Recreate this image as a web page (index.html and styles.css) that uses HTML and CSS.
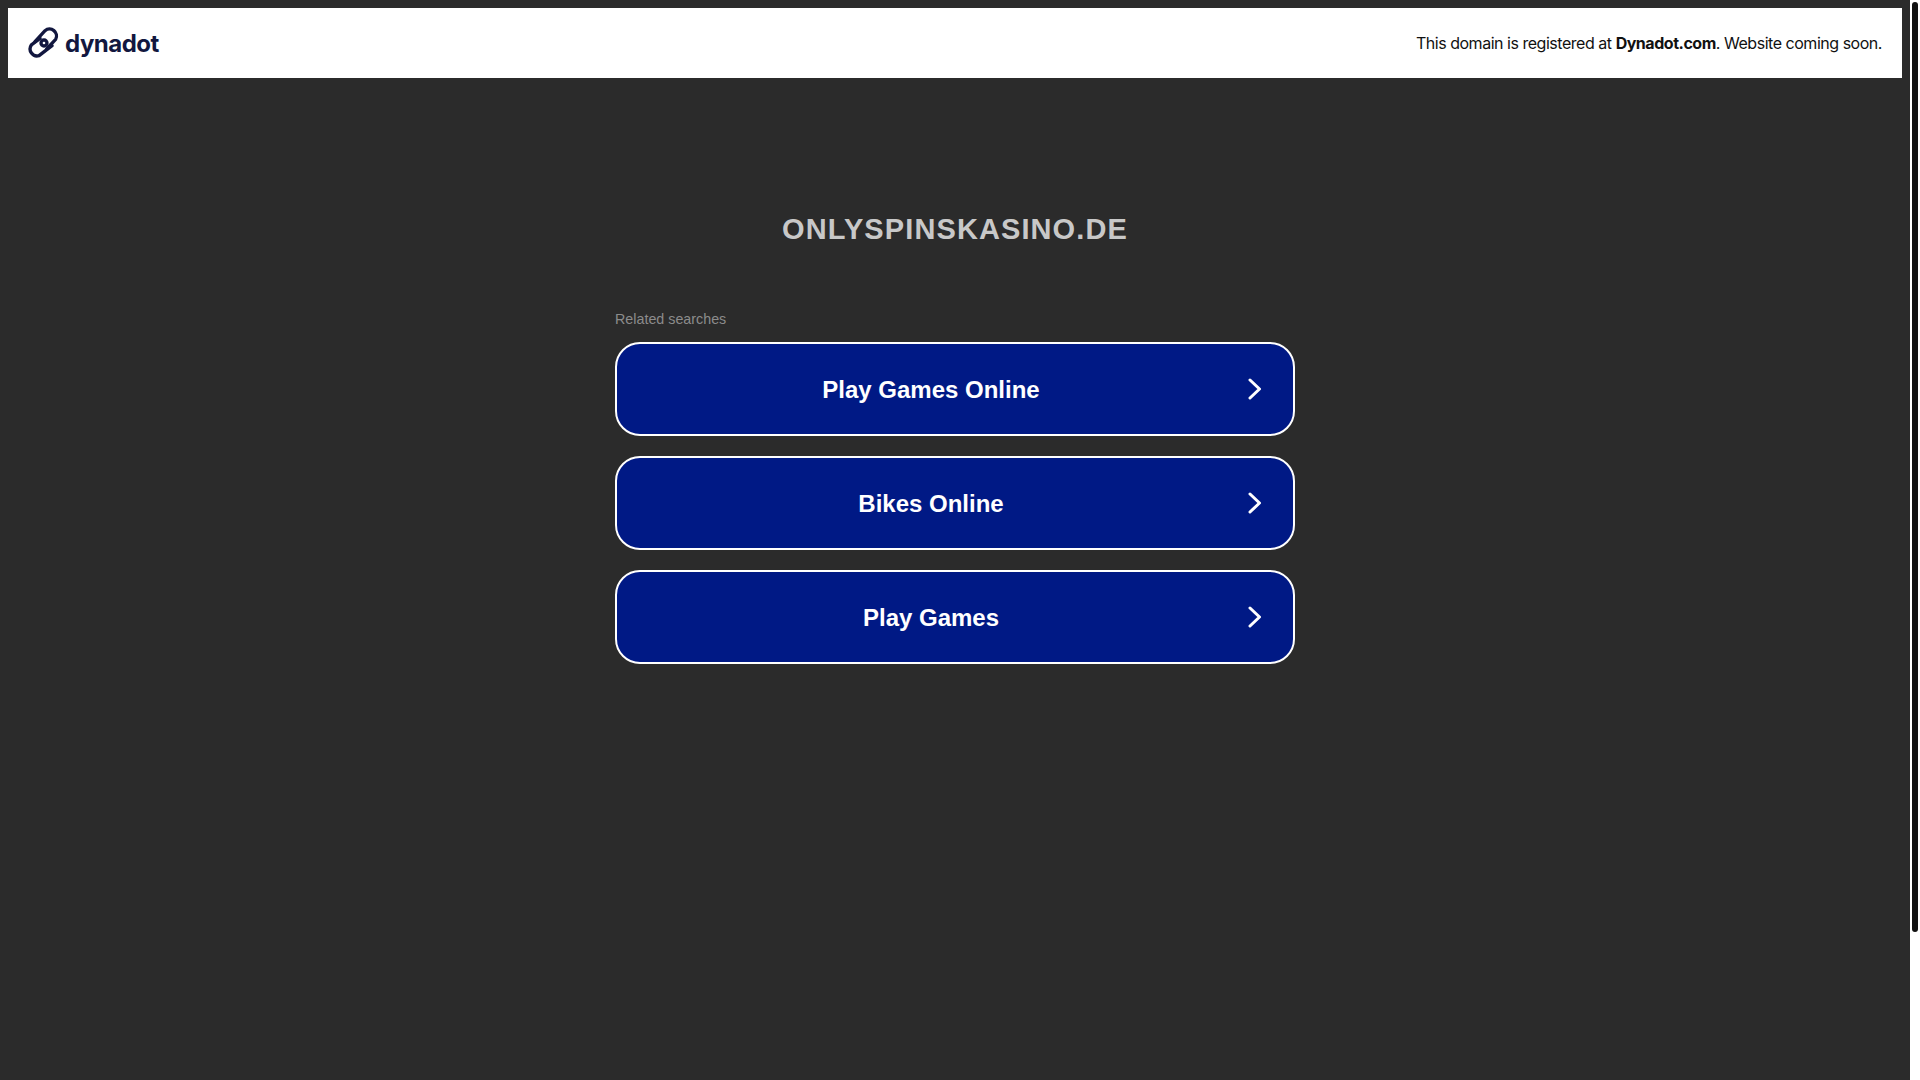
FILE: index.html
```html
<!DOCTYPE html>
<html lang="en">
<head>
    <meta charset="UTF-8">
    <title>onlyspinskasino.de</title>
    <link rel="stylesheet" href="styles.css">
</head>
<body>
    <div class="page">
        <header class="topbar">
            <a class="logo" href="#">
                <svg class="logo-icon" viewBox="80 80 96 96" width="32" height="32" fill="none" stroke="#12173f" stroke-width="10" stroke-linecap="round">
                    <path d="M101 124 L131 91 A21 21 0 0 1 163 117 L136 146"/>
                    <path d="M116 114 L90 134 A21 21 0 0 0 113 166 L152 136"/>
                    <circle cx="128" cy="128" r="9"/>
                </svg>
                <span class="logo-text">dynadot</span>
            </a>
            <p class="notice">This domain is registered at <strong>Dynadot.com</strong>. Website coming soon.</p>
        </header>
        <main class="content">
            <h1 class="domain">ONLYSPINSKASINO.DE</h1>
            <section class="searches">
                <h2 class="searches-title">Related searches</h2>
                <a class="search-link" href="#">
                    <span class="search-label">Play Games Online</span>
                    <svg class="chevron" viewBox="0 0 14 22" width="14" height="22"><path d="M2 2 L11.5 11 L2 20"/></svg>
                </a>
                <a class="search-link" href="#">
                    <span class="search-label">Bikes Online</span>
                    <svg class="chevron" viewBox="0 0 14 22" width="14" height="22"><path d="M2 2 L11.5 11 L2 20"/></svg>
                </a>
                <a class="search-link" href="#">
                    <span class="search-label">Play Games</span>
                    <svg class="chevron" viewBox="0 0 14 22" width="14" height="22"><path d="M2 2 L11.5 11 L2 20"/></svg>
                </a>
            </section>
        </main>
    </div>
    <div class="scrollbar"><div class="scrollbar-thumb"></div></div>
</body>
</html>
```

FILE: styles.css
```css
html, body {
    height: 100%;
}
body {
    margin: 0;
    display: flex;
    overflow: hidden;
    background-color: #fff;
    font-family: 'Liberation Sans', Arial, sans-serif;
}
.page {
    flex: 1;
    background-color: #2b2b2b;
    padding: 8px;
    box-sizing: border-box;
}
.topbar {
    display: flex;
    align-items: center;
    justify-content: space-between;
    height: 70px;
    padding: 0 20px;
    background-color: #fff;
}
.logo {
    display: flex;
    align-items: center;
    gap: 5px;
    text-decoration: none;
}
.logo-text {
    font-family: Inter, sans-serif;
    font-size: 24px;
    font-weight: 700;
    letter-spacing: -0.5px;
    color: #12173f;
}
.notice {
    margin: 0;
    font-family: Inter, sans-serif;
    font-size: 16px;
    letter-spacing: -0.47px;
    color: #111;
}
.notice strong {
    font-weight: 700;
}
.content {
    width: 680px;
    margin: 0 auto;
}
.domain {
    margin: 0;
    padding-top: 134px;
    font-size: 29px;
    line-height: 34px;
    letter-spacing: 1.1px;
    text-align: center;
    color: #c8c8c8;
}
.searches {
    margin-top: 65px;
}
.searches-title {
    margin: 0 0 15px;
    font-size: 14.3px;
    font-weight: 400;
    line-height: 16px;
    color: #8c8c8c;
}
.search-link {
    display: flex;
    align-items: center;
    height: 94px;
    margin-bottom: 20px;
    padding-right: 31px;
    box-sizing: border-box;
    background-color: #001985;
    border: 2px solid #fff;
    border-radius: 25px;
    color: #fff;
    text-decoration: none;
}
.search-label {
    flex: 1;
    padding-top: 2px;
    padding-right: 3px;
    font-size: 24px;
    font-weight: 700;
    text-align: center;
}
.chevron {
    fill: none;
    stroke: #fff;
    stroke-width: 3;
    stroke-linecap: round;
    stroke-linejoin: round;
}
.scrollbar {
    flex: 0 0 10px;
    padding: 2px;
    box-sizing: border-box;
}
.scrollbar-thumb {
    height: 930px;
    background-color: #111;
    border-radius: 3px;
}
```
